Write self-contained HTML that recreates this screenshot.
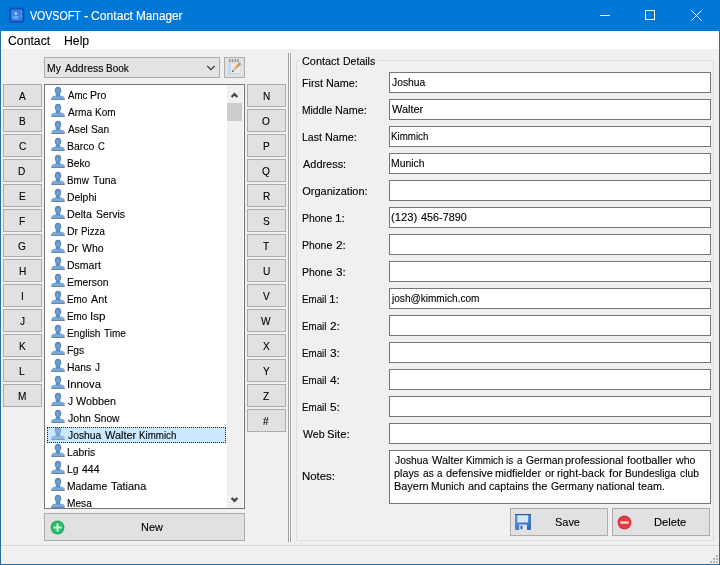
<!DOCTYPE html>
<html><head><meta charset="utf-8"><title>VOVSOFT - Contact Manager</title>
<style>
html,body{margin:0;padding:0;}
body{width:720px;height:565px;overflow:hidden;background:#f0f0f0;font-family:"Liberation Sans",sans-serif;position:relative;}
.a{position:absolute;box-sizing:border-box;}
.t{position:absolute;white-space:pre;line-height:normal;transform-origin:0 0;font-family:"Liberation Sans",sans-serif;-webkit-text-stroke:0.12px currentColor;}
.btn{position:absolute;box-sizing:border-box;background:#e1e1e1;border:1px solid #adadad;}
.fld{position:absolute;box-sizing:border-box;background:#fff;border:1px solid #767676;}
</style></head><body>
<div id="app" style="position:absolute;left:0;top:0;width:720px;height:565px;will-change:transform;">

<div class="a" style="left:0;top:0;width:720px;height:31px;background:#0078d7;"></div>
<div class="a" style="left:0;top:31px;width:720px;height:18px;background:#fff;"></div>
<svg class="a" style="left:8px;top:6px" width="18" height="18" viewBox="0 0 18 18"><rect x="1" y="1.500" width="15.300" height="15.200" rx="2.800" fill="#0c52be"/><rect x="3" y="3.500" width="11.300" height="11.200" rx="1.200" fill="#3b7fe2"/><circle cx="7.800" cy="7.400" r="1.500" fill="#9ad2ff"/><ellipse cx="7.800" cy="11.400" rx="3.100" ry="1.700" fill="#6aaaf2"/><rect x="12.600" y="5" width="1.600" height="2" fill="#5a98ee"/><rect x="12.600" y="9" width="1.600" height="2" fill="#5a98ee"/></svg>
<svg class="a" style="left:581px;top:0" width="138" height="31" viewBox="0 0 138 31" fill="none" stroke="#fff" stroke-width="1"><path d="M19 15.500h10"/><rect x="64.500" y="10.500" width="9" height="9"/><path d="M110.500 10.500l10 10m0-10l-10 10"/></svg>
<div class="a" style="left:288px;top:53px;width:1px;height:489px;background:#a0a0a0"></div>
<div class="a" style="left:290px;top:53px;width:1px;height:489px;background:#a0a0a0"></div>
<div class="a" style="left:289px;top:53px;width:1px;height:489px;background:#fafafa"></div>
<div class="a" style="left:291px;top:53px;width:1px;height:489px;background:#f9f9f9"></div>
<div class="btn" style="left:44px;top:57px;width:176px;height:21px;background:#e3e3e3;"></div>
<svg class="a" style="left:205px;top:64px" width="12" height="8" viewBox="0 0 12 8" fill="none" stroke="#333" stroke-width="1.300"><path d="M2.200 1.900l3.700 3.700l3.700-3.700"/></svg>
<div class="btn" style="left:224px;top:57px;width:21px;height:21px;"></div>
<svg class="a" style="left:227px;top:58px" width="16" height="18" viewBox="0 0 16 18"><defs><linearGradient id="pg" x1="1" y1="0" x2="0" y2="1"><stop offset="0" stop-color="#c68a42"/><stop offset="1" stop-color="#ecd0ae"/></linearGradient></defs><rect x="0.800" y="5.200" width="12.300" height="11.500" fill="#efe7e6"/><rect x="0.800" y="5.200" width="3.200" height="11.500" fill="#c3d9ec"/><rect x="0.800" y="15" width="12.300" height="1.700" fill="#c6dbf0"/><g fill="#9a9a9a"><rect x="2" y="1" width="1.600" height="3.200"/><rect x="4.700" y="1" width="1.600" height="3.200"/><rect x="7.400" y="1" width="1.600" height="3.200"/><rect x="10.100" y="1" width="1.600" height="3.200"/></g><path d="M12.600 5.900L6 12.800" stroke="url(#pg)" stroke-width="2.500" stroke-linecap="round"/><path d="M4.800 14.200l.6-2.200l1.700 1.600z" fill="#6e6258"/></svg>
<div class="btn" style="left:3px;top:84px;width:39px;height:23px;"></div>
<div class="btn" style="left:3px;top:109px;width:39px;height:23px;"></div>
<div class="btn" style="left:3px;top:134px;width:39px;height:23px;"></div>
<div class="btn" style="left:3px;top:159px;width:39px;height:23px;"></div>
<div class="btn" style="left:3px;top:184px;width:39px;height:23px;"></div>
<div class="btn" style="left:3px;top:209px;width:39px;height:23px;"></div>
<div class="btn" style="left:3px;top:234px;width:39px;height:23px;"></div>
<div class="btn" style="left:3px;top:259px;width:39px;height:23px;"></div>
<div class="btn" style="left:3px;top:284px;width:39px;height:23px;"></div>
<div class="btn" style="left:3px;top:309px;width:39px;height:23px;"></div>
<div class="btn" style="left:3px;top:334px;width:39px;height:23px;"></div>
<div class="btn" style="left:3px;top:359px;width:39px;height:23px;"></div>
<div class="btn" style="left:3px;top:384px;width:39px;height:23px;"></div>
<div class="btn" style="left:247px;top:84px;width:39px;height:23px;"></div>
<div class="btn" style="left:247px;top:109px;width:39px;height:23px;"></div>
<div class="btn" style="left:247px;top:134px;width:39px;height:23px;"></div>
<div class="btn" style="left:247px;top:159px;width:39px;height:23px;"></div>
<div class="btn" style="left:247px;top:184px;width:39px;height:23px;"></div>
<div class="btn" style="left:247px;top:209px;width:39px;height:23px;"></div>
<div class="btn" style="left:247px;top:234px;width:39px;height:23px;"></div>
<div class="btn" style="left:247px;top:259px;width:39px;height:23px;"></div>
<div class="btn" style="left:247px;top:284px;width:39px;height:23px;"></div>
<div class="btn" style="left:247px;top:309px;width:39px;height:23px;"></div>
<div class="btn" style="left:247px;top:334px;width:39px;height:23px;"></div>
<div class="btn" style="left:247px;top:359px;width:39px;height:23px;"></div>
<div class="btn" style="left:247px;top:384px;width:39px;height:23px;"></div>
<div class="btn" style="left:247px;top:409px;width:39px;height:23px;"></div>
<div class="a" id="lb" style="left:44px;top:84px;width:201px;height:425px;background:#fff;border:1px solid #767676;overflow:hidden;">
<div class="a" style="left:2px;top:342px;width:179px;height:16px;background:#cce8ff;border:1px dotted #222;"></div>
<svg class="a" style="left:5px;top:1px" width="16" height="16" viewBox="0 0 16 16"><use href="#person"/></svg>
<svg class="a" style="left:5px;top:18px" width="16" height="16" viewBox="0 0 16 16"><use href="#person"/></svg>
<svg class="a" style="left:5px;top:35px" width="16" height="16" viewBox="0 0 16 16"><use href="#person"/></svg>
<svg class="a" style="left:5px;top:52px" width="16" height="16" viewBox="0 0 16 16"><use href="#person"/></svg>
<svg class="a" style="left:5px;top:69px" width="16" height="16" viewBox="0 0 16 16"><use href="#person"/></svg>
<svg class="a" style="left:5px;top:86px" width="16" height="16" viewBox="0 0 16 16"><use href="#person"/></svg>
<svg class="a" style="left:5px;top:103px" width="16" height="16" viewBox="0 0 16 16"><use href="#person"/></svg>
<svg class="a" style="left:5px;top:120px" width="16" height="16" viewBox="0 0 16 16"><use href="#person"/></svg>
<svg class="a" style="left:5px;top:137px" width="16" height="16" viewBox="0 0 16 16"><use href="#person"/></svg>
<svg class="a" style="left:5px;top:154px" width="16" height="16" viewBox="0 0 16 16"><use href="#person"/></svg>
<svg class="a" style="left:5px;top:171px" width="16" height="16" viewBox="0 0 16 16"><use href="#person"/></svg>
<svg class="a" style="left:5px;top:188px" width="16" height="16" viewBox="0 0 16 16"><use href="#person"/></svg>
<svg class="a" style="left:5px;top:205px" width="16" height="16" viewBox="0 0 16 16"><use href="#person"/></svg>
<svg class="a" style="left:5px;top:222px" width="16" height="16" viewBox="0 0 16 16"><use href="#person"/></svg>
<svg class="a" style="left:5px;top:239px" width="16" height="16" viewBox="0 0 16 16"><use href="#person"/></svg>
<svg class="a" style="left:5px;top:256px" width="16" height="16" viewBox="0 0 16 16"><use href="#person"/></svg>
<svg class="a" style="left:5px;top:273px" width="16" height="16" viewBox="0 0 16 16"><use href="#person"/></svg>
<svg class="a" style="left:5px;top:290px" width="16" height="16" viewBox="0 0 16 16"><use href="#person"/></svg>
<svg class="a" style="left:5px;top:307px" width="16" height="16" viewBox="0 0 16 16"><use href="#person"/></svg>
<svg class="a" style="left:5px;top:324px" width="16" height="16" viewBox="0 0 16 16"><use href="#person"/></svg>
<svg class="a" style="opacity:0.75;left:5px;top:341px" width="16" height="16" viewBox="0 0 16 16"><use href="#person"/></svg>
<svg class="a" style="left:5px;top:358px" width="16" height="16" viewBox="0 0 16 16"><use href="#person"/></svg>
<svg class="a" style="left:5px;top:375px" width="16" height="16" viewBox="0 0 16 16"><use href="#person"/></svg>
<svg class="a" style="left:5px;top:392px" width="16" height="16" viewBox="0 0 16 16"><use href="#person"/></svg>
<svg class="a" style="left:5px;top:409px" width="16" height="16" viewBox="0 0 16 16"><use href="#person"/></svg>
<span class="t" style="left:22.89px;top:4.04px;font-size:11px;color:#000;transform:scaleX(0.8837);">Amc</span>
<span class="t" style="left:45.17px;top:4.04px;font-size:11px;color:#000;transform:scaleX(0.9524);">Pro</span>
<span class="t" style="left:22.89px;top:21.05px;font-size:11px;color:#000;transform:scaleX(0.9187);">Arma</span>
<span class="t" style="left:50.21px;top:21.05px;font-size:11px;color:#000;transform:scaleX(0.9048);">Kom</span>
<span class="t" style="left:22.88px;top:38.05px;font-size:11px;color:#000;transform:scaleX(0.9268);">Asel</span>
<span class="t" style="left:45.54px;top:38.05px;font-size:11px;color:#000;transform:scaleX(0.9252);">San</span>
<span class="t" style="left:22.17px;top:55.05px;font-size:11px;color:#000;transform:scaleX(0.9498);">Barco</span>
<span class="t" style="left:52.57px;top:55.05px;font-size:11px;color:#000;transform:scaleX(0.8571);">C</span>
<span class="t" style="left:22.19px;top:72.05px;font-size:11px;color:#000;transform:scaleX(0.9263);">Beko</span>
<span class="t" style="left:22.22px;top:89.05px;font-size:11px;color:#000;transform:scaleX(0.8889);">Bmw</span>
<span class="t" style="left:47.76px;top:89.05px;font-size:11px;color:#000;transform:scaleX(0.9436);">Tuna</span>
<span class="t" style="left:22.17px;top:106.05px;font-size:11px;color:#000;transform:scaleX(0.9451);">Delphi</span>
<span class="t" style="left:22.15px;top:123.05px;font-size:11px;color:#000;transform:scaleX(0.9697);">Delta</span>
<span class="t" style="left:50.53px;top:123.05px;font-size:11px;color:#000;transform:scaleX(0.9451);">Servis</span>
<span class="t" style="left:22.17px;top:140.04px;font-size:11px;color:#000;transform:scaleX(0.9524);">Dr</span>
<span class="t" style="left:36.23px;top:140.04px;font-size:11px;color:#000;transform:scaleX(0.8846);">Pizza</span>
<span class="t" style="left:22.17px;top:157.04px;font-size:11px;color:#000;transform:scaleX(0.9524);">Dr</span>
<span class="t" style="left:36.88px;top:157.04px;font-size:11px;color:#000;transform:scaleX(0.9545);">Who</span>
<span class="t" style="left:22.16px;top:174.04px;font-size:11px;color:#000;transform:scaleX(0.9565);">Dsmart</span>
<span class="t" style="left:22.17px;top:191.04px;font-size:11px;color:#000;transform:scaleX(0.9440);">Emerson</span>
<span class="t" style="left:22.22px;top:208.04px;font-size:11px;color:#000;transform:scaleX(0.8941);">Emo</span>
<span class="t" style="left:45.88px;top:208.04px;font-size:11px;color:#000;transform:scaleX(0.9771);">Ant</span>
<span class="t" style="left:22.22px;top:225.04px;font-size:11px;color:#000;transform:scaleX(0.8941);">Emo</span>
<span class="t" style="left:44.94px;top:225.04px;font-size:11px;color:#000;transform:scaleX(1.0566);">Isp</span>
<span class="t" style="left:22.19px;top:242.04px;font-size:11px;color:#000;transform:scaleX(0.9275);">English</span>
<span class="t" style="left:58.77px;top:242.04px;font-size:11px;color:#000;transform:scaleX(0.9032);">Time</span>
<span class="t" style="left:22.18px;top:259.05px;font-size:11px;color:#000;transform:scaleX(0.9343);">Fgs</span>
<span class="t" style="left:22.17px;top:276.05px;font-size:11px;color:#000;transform:scaleX(0.9436);">Hans</span>
<span class="t" style="left:49.77px;top:276.05px;font-size:11px;color:#000;transform:scaleX(0.9143);">J</span>
<span class="t" style="left:21.97px;top:293.05px;font-size:11px;color:#000;transform:scaleX(1.0312);">Innova</span>
<span class="t" style="left:22.77px;top:310.05px;font-size:11px;color:#000;transform:scaleX(0.9143);">J</span>
<span class="t" style="left:30.88px;top:310.05px;font-size:11px;color:#000;transform:scaleX(0.9781);">Wobben</span>
<span class="t" style="left:22.76px;top:327.05px;font-size:11px;color:#000;transform:scaleX(0.9617);">John</span>
<span class="t" style="left:48.54px;top:327.05px;font-size:11px;color:#000;transform:scaleX(0.9259);">Snow</span>
<span class="t" style="left:22.77px;top:344.05px;font-size:11px;color:#000;transform:scaleX(0.9362);">Joshua</span>
<span class="t" style="left:59.88px;top:344.05px;font-size:11px;color:#000;transform:scaleX(0.9960);">Walter</span>
<span class="t" style="left:94.22px;top:344.05px;font-size:11px;color:#000;transform:scaleX(0.8862);">Kimmich</span>
<span class="t" style="left:22.18px;top:361.05px;font-size:11px;color:#000;transform:scaleX(0.9391);">Labris</span>
<span class="t" style="left:22.18px;top:378.05px;font-size:11px;color:#000;transform:scaleX(0.9412);">Lg</span>
<span class="t" style="left:36.76px;top:378.05px;font-size:11px;color:#000;transform:scaleX(0.9577);">444</span>
<span class="t" style="left:22.18px;top:395.05px;font-size:11px;color:#000;transform:scaleX(0.9398);">Madame</span>
<span class="t" style="left:65.75px;top:395.05px;font-size:11px;color:#000;transform:scaleX(0.9929);">Tatiana</span>
<span class="t" style="left:22.19px;top:412.05px;font-size:11px;color:#000;transform:scaleX(0.9231);">Mesa</span>
<div class="a" style="left:182px;top:0;width:16px;height:423px;background:#f0f0f0;"></div>
<div class="a" style="left:182px;top:18px;width:15px;height:18px;background:#cdcdcd;"></div>
<svg class="a" style="left:184px;top:5px" width="11" height="9" viewBox="0 0 11 9" fill="none" stroke="#454545" stroke-width="2.300"><path d="M2.600 7l2.900-2.900l2.900 2.900"/></svg>
<svg class="a" style="left:184px;top:410.500px" width="11" height="9" viewBox="0 0 11 9" fill="none" stroke="#454545" stroke-width="2.300"><path d="M2.600 2l2.900 2.900l2.900-2.900"/></svg>
</div>
<div class="btn" style="left:44px;top:513px;width:201px;height:28px;"></div>
<svg class="a" style="left:49.500px;top:519.500px" width="15" height="15" viewBox="0 0 15 15"><circle cx="7.500" cy="7.500" r="6.900" fill="#27a45e"/><circle cx="7.500" cy="7.500" r="5.900" fill="#2fbb6c"/><path d="M7.500 3.500v8M3.500 7.500h8" stroke="#c6ffdc" stroke-width="2"/></svg>
<div class="a" style="left:296px;top:60px;width:418px;height:481px;border:1px solid #dfdfdf;"></div>
<div class="a" style="left:300px;top:56px;width:78px;height:10px;background:#f0f0f0;"></div>
<div class="fld" style="left:389px;top:72px;width:322px;height:21px;"></div>
<div class="fld" style="left:389px;top:99px;width:322px;height:21px;"></div>
<div class="fld" style="left:389px;top:126px;width:322px;height:21px;"></div>
<div class="fld" style="left:389px;top:153px;width:322px;height:21px;"></div>
<div class="fld" style="left:389px;top:180px;width:322px;height:21px;"></div>
<div class="fld" style="left:389px;top:207px;width:322px;height:21px;"></div>
<div class="fld" style="left:389px;top:234px;width:322px;height:21px;"></div>
<div class="fld" style="left:389px;top:261px;width:322px;height:21px;"></div>
<div class="fld" style="left:389px;top:288px;width:322px;height:21px;"></div>
<div class="fld" style="left:389px;top:315px;width:322px;height:21px;"></div>
<div class="fld" style="left:389px;top:342px;width:322px;height:21px;"></div>
<div class="fld" style="left:389px;top:369px;width:322px;height:21px;"></div>
<div class="fld" style="left:389px;top:396px;width:322px;height:21px;"></div>
<div class="fld" style="left:389px;top:423px;width:322px;height:21px;"></div>
<div class="fld" style="left:389px;top:450px;width:322px;height:54px;"></div>
<div class="btn" style="left:510px;top:508px;width:98px;height:28px;"></div>
<div class="btn" style="left:612px;top:508px;width:98px;height:28px;"></div>
<svg class="a" style="left:515px;top:514px" width="16" height="16" viewBox="0 0 16 16"><defs><linearGradient id="fl" x1="0" y1="0" x2="1" y2="1"><stop offset="0" stop-color="#5a9ae6"/><stop offset="1" stop-color="#2f66b4"/></linearGradient></defs><rect x="0" y="0" width="16" height="16" rx="1" fill="url(#fl)"/><rect x="0" y="0" width="16" height="1.200" fill="#2b5c9c"/><rect x="2.400" y="1.400" width="10.800" height="7" fill="#ddeeff"/><path d="M3.400 3.800h8.800M3.400 6h8.800" stroke="#bcd6f2" stroke-width="0.800"/><rect x="4.200" y="10.600" width="7.800" height="5.400" fill="#d6e3f4"/><rect x="5.600" y="12" width="1.700" height="3.200" fill="#33507c"/></svg>
<svg class="a" style="left:617.200px;top:514.800px" width="15" height="15" viewBox="0 0 15 15"><circle cx="7.500" cy="7.500" r="6.900" fill="#cf3038"/><circle cx="7.500" cy="7.500" r="5.900" fill="#e23c46"/><rect x="3.400" y="6.500" width="8.200" height="2.100" fill="#ffe9dc"/></svg>
<div class="a" style="left:1px;top:545px;width:718px;height:1px;background:#d7d7d7;"></div>
<div class="a" style="left:716px;top:555px;width:2px;height:2px;background:#b8b8b8;"></div><div class="a" style="left:713px;top:558px;width:2px;height:2px;background:#b8b8b8;"></div><div class="a" style="left:716px;top:558px;width:2px;height:2px;background:#b8b8b8;"></div><div class="a" style="left:710px;top:561px;width:2px;height:2px;background:#b8b8b8;"></div><div class="a" style="left:713px;top:561px;width:2px;height:2px;background:#b8b8b8;"></div><div class="a" style="left:716px;top:561px;width:2px;height:2px;background:#b8b8b8;"></div>
<div class="a" style="left:0;top:31px;width:1px;height:534px;background:#2b6f9c;"></div>
<div class="a" style="left:719px;top:31px;width:1px;height:534px;background:#2b6f9c;"></div>
<div class="a" style="left:0;top:564px;width:720px;height:1px;background:#2a6aa0;"></div>
<span class="t" style="left:30.29px;top:9.44px;font-size:12px;color:#fff;transform:scaleX(0.8826);">VOVSOFT</span>
<span class="t" style="left:84.14px;top:9.44px;font-size:12px;color:#fff;transform:scaleX(1.0800);">-</span>
<span class="t" style="left:91.27px;top:9.44px;font-size:12px;color:#fff;transform:scaleX(1.0142);">Contact</span>
<span class="t" style="left:136.27px;top:9.44px;font-size:12px;color:#fff;transform:scaleX(0.9810);">Manager</span>
<span class="t" style="left:7.66px;top:33.74px;font-size:12px;color:#000;transform:scaleX(1.0191);">Contact</span>
<span class="t" style="left:63.68px;top:33.74px;font-size:12px;color:#000;transform:scaleX(1.0205);">Help</span>
<span class="t" style="left:46.97px;top:61.84px;font-size:11px;color:#000;transform:scaleX(0.9455);">My</span>
<span class="t" style="left:64.68px;top:61.84px;font-size:11px;color:#000;transform:scaleX(0.9530);">Address</span>
<span class="t" style="left:106.00px;top:61.84px;font-size:11px;color:#000;transform:scaleX(0.9119);">Book</span>
<span class="t" style="left:18.81px;top:89.84px;font-size:11px;color:#000;transform:scaleX(0.9200);">A</span>
<span class="t" style="left:18.69px;top:114.84px;font-size:11px;color:#000;transform:scaleX(0.9200);">B</span>
<span class="t" style="left:18.52px;top:139.84px;font-size:11px;color:#000;transform:scaleX(0.9200);">C</span>
<span class="t" style="left:18.40px;top:164.84px;font-size:11px;color:#000;transform:scaleX(0.9200);">D</span>
<span class="t" style="left:18.63px;top:189.84px;font-size:11px;color:#000;transform:scaleX(0.9200);">E</span>
<span class="t" style="left:18.92px;top:214.84px;font-size:11px;color:#000;transform:scaleX(0.9200);">F</span>
<span class="t" style="left:18.40px;top:239.84px;font-size:11px;color:#000;transform:scaleX(0.9200);">G</span>
<span class="t" style="left:18.58px;top:264.85px;font-size:11px;color:#000;transform:scaleX(0.9200);">H</span>
<span class="t" style="left:20.82px;top:289.85px;font-size:11px;color:#000;transform:scaleX(0.9200);">I</span>
<span class="t" style="left:19.96px;top:314.85px;font-size:11px;color:#000;transform:scaleX(0.9200);">J</span>
<span class="t" style="left:18.52px;top:339.85px;font-size:11px;color:#000;transform:scaleX(0.9200);">K</span>
<span class="t" style="left:19.15px;top:364.85px;font-size:11px;color:#000;transform:scaleX(0.9200);">L</span>
<span class="t" style="left:18.00px;top:389.85px;font-size:11px;color:#000;transform:scaleX(0.9200);">M</span>
<span class="t" style="left:262.68px;top:89.84px;font-size:11px;color:#000;transform:scaleX(0.9200);">N</span>
<span class="t" style="left:262.39px;top:114.84px;font-size:11px;color:#000;transform:scaleX(0.9200);">O</span>
<span class="t" style="left:262.79px;top:139.84px;font-size:11px;color:#000;transform:scaleX(0.9200);">P</span>
<span class="t" style="left:262.39px;top:164.84px;font-size:11px;color:#000;transform:scaleX(0.9200);">Q</span>
<span class="t" style="left:262.50px;top:189.84px;font-size:11px;color:#000;transform:scaleX(0.9200);">R</span>
<span class="t" style="left:262.91px;top:214.84px;font-size:11px;color:#000;transform:scaleX(0.9200);">S</span>
<span class="t" style="left:263.19px;top:239.84px;font-size:11px;color:#000;transform:scaleX(0.9200);">T</span>
<span class="t" style="left:262.62px;top:264.85px;font-size:11px;color:#000;transform:scaleX(0.9200);">U</span>
<span class="t" style="left:262.91px;top:289.85px;font-size:11px;color:#000;transform:scaleX(0.9200);">V</span>
<span class="t" style="left:261.47px;top:314.85px;font-size:11px;color:#000;transform:scaleX(0.9200);">W</span>
<span class="t" style="left:262.97px;top:339.85px;font-size:11px;color:#000;transform:scaleX(0.9200);">X</span>
<span class="t" style="left:262.97px;top:364.85px;font-size:11px;color:#000;transform:scaleX(0.9200);">Y</span>
<span class="t" style="left:263.19px;top:389.85px;font-size:11px;color:#000;transform:scaleX(0.9200);">Z</span>
<span class="t" style="left:263.48px;top:414.85px;font-size:11px;color:#000;transform:scaleX(0.9200);">#</span>
<span class="t" style="left:302.11px;top:55.05px;font-size:11px;color:#000;transform:scaleX(0.9900);">Contact</span>
<span class="t" style="left:342.76px;top:55.05px;font-size:11px;color:#000;transform:scaleX(0.9575);">Details</span>
<span class="t" style="left:301.84px;top:76.84px;font-size:11px;color:#000;transform:scaleX(0.9816);">First</span>
<span class="t" style="left:325.84px;top:76.84px;font-size:11px;color:#000;transform:scaleX(0.9836);">Name:</span>
<span class="t" style="left:301.88px;top:103.84px;font-size:11px;color:#000;transform:scaleX(0.9355);">Middle</span>
<span class="t" style="left:334.84px;top:103.84px;font-size:11px;color:#000;transform:scaleX(0.9836);">Name:</span>
<span class="t" style="left:301.86px;top:130.84px;font-size:11px;color:#000;transform:scaleX(0.9560);">Last</span>
<span class="t" style="left:324.84px;top:130.84px;font-size:11px;color:#000;transform:scaleX(0.9836);">Name:</span>
<span class="t" style="left:302.58px;top:157.84px;font-size:11px;color:#000;transform:scaleX(0.9941);">Address:</span>
<span class="t" style="left:302.20px;top:184.84px;font-size:11px;color:#000;">Organization:</span>
<span class="t" style="left:301.87px;top:211.84px;font-size:11px;color:#000;transform:scaleX(0.9508);">Phone</span>
<span class="t" style="left:335.34px;top:211.84px;font-size:11px;color:#000;transform:scaleX(1.0800);">1:</span>
<span class="t" style="left:301.87px;top:238.84px;font-size:11px;color:#000;transform:scaleX(0.9508);">Phone</span>
<span class="t" style="left:335.54px;top:238.84px;font-size:11px;color:#000;transform:scaleX(1.0800);">2:</span>
<span class="t" style="left:301.87px;top:265.85px;font-size:11px;color:#000;transform:scaleX(0.9508);">Phone</span>
<span class="t" style="left:335.54px;top:265.85px;font-size:11px;color:#000;transform:scaleX(1.0800);">3:</span>
<span class="t" style="left:301.92px;top:292.85px;font-size:11px;color:#000;transform:scaleX(0.8889);">Email</span>
<span class="t" style="left:329.34px;top:292.85px;font-size:11px;color:#000;transform:scaleX(1.0800);">1:</span>
<span class="t" style="left:301.92px;top:319.85px;font-size:11px;color:#000;transform:scaleX(0.8889);">Email</span>
<span class="t" style="left:329.54px;top:319.85px;font-size:11px;color:#000;transform:scaleX(1.0800);">2:</span>
<span class="t" style="left:301.92px;top:346.85px;font-size:11px;color:#000;transform:scaleX(0.8889);">Email</span>
<span class="t" style="left:329.54px;top:346.85px;font-size:11px;color:#000;transform:scaleX(1.0800);">3:</span>
<span class="t" style="left:301.92px;top:373.85px;font-size:11px;color:#000;transform:scaleX(0.8889);">Email</span>
<span class="t" style="left:329.68px;top:373.85px;font-size:11px;color:#000;transform:scaleX(1.0800);">4:</span>
<span class="t" style="left:301.92px;top:400.85px;font-size:11px;color:#000;transform:scaleX(0.8889);">Email</span>
<span class="t" style="left:329.54px;top:400.85px;font-size:11px;color:#000;transform:scaleX(1.0800);">5:</span>
<span class="t" style="left:302.58px;top:427.85px;font-size:11px;color:#000;transform:scaleX(0.9600);">Web</span>
<span class="t" style="left:327.19px;top:427.85px;font-size:11px;color:#000;transform:scaleX(1.0244);">Site:</span>
<span class="t" style="left:301.79px;top:470.05px;font-size:11px;color:#000;transform:scaleX(1.0377);">Notes:</span>
<span class="t" style="left:391.77px;top:76.05px;font-size:11px;color:#000;transform:scaleX(0.9362);">Joshua</span>
<span class="t" style="left:391.88px;top:103.05px;font-size:11px;color:#000;transform:scaleX(0.9960);">Walter</span>
<span class="t" style="left:391.22px;top:130.04px;font-size:11px;color:#000;transform:scaleX(0.8862);">Kimmich</span>
<span class="t" style="left:391.17px;top:157.04px;font-size:11px;color:#000;transform:scaleX(0.9446);">Munich</span>
<span class="t" style="left:391.36px;top:211.04px;font-size:11px;color:#000;transform:scaleX(1.0256);">(123)</span>
<span class="t" style="left:420.75px;top:211.04px;font-size:11px;color:#000;transform:scaleX(0.9836);">456-7890</span>
<span class="t" style="left:392.23px;top:292.05px;font-size:11px;color:#000;transform:scaleX(0.9158);">josh@kimmich.com</span>
<span class="t" style="left:394.77px;top:453.94px;font-size:11px;color:#000;transform:scaleX(0.9362);">Joshua</span>
<span class="t" style="left:431.88px;top:453.94px;font-size:11px;color:#000;transform:scaleX(0.9960);">Walter</span>
<span class="t" style="left:466.22px;top:453.94px;font-size:11px;color:#000;transform:scaleX(0.8862);">Kimmich</span>
<span class="t" style="left:506.33px;top:453.94px;font-size:11px;color:#000;transform:scaleX(0.8889);">is</span>
<span class="t" style="left:516.56px;top:453.94px;font-size:11px;color:#000;transform:scaleX(0.8889);">a</span>
<span class="t" style="left:525.53px;top:453.94px;font-size:11px;color:#000;transform:scaleX(0.9351);">German</span>
<span class="t" style="left:565.26px;top:453.94px;font-size:11px;color:#000;transform:scaleX(0.9849);">professional</span>
<span class="t" style="left:626.88px;top:453.94px;font-size:11px;color:#000;">footballer</span>
<span class="t" style="left:676.00px;top:453.94px;font-size:11px;color:#000;transform:scaleX(0.9620);">who</span>
<span class="t" style="left:394.27px;top:466.94px;font-size:11px;color:#000;transform:scaleX(0.9796);">plays</span>
<span class="t" style="left:422.53px;top:466.94px;font-size:11px;color:#000;transform:scaleX(0.9302);">as</span>
<span class="t" style="left:436.56px;top:466.94px;font-size:11px;color:#000;transform:scaleX(0.8889);">a</span>
<span class="t" style="left:445.50px;top:466.94px;font-size:11px;color:#000;transform:scaleX(0.9973);">defensive</span>
<span class="t" style="left:495.28px;top:466.94px;font-size:11px;color:#000;transform:scaleX(0.9626);">midfielder</span>
<span class="t" style="left:544.51px;top:466.94px;font-size:11px;color:#000;transform:scaleX(0.9863);">or</span>
<span class="t" style="left:557.26px;top:466.94px;font-size:11px;color:#000;transform:scaleX(0.9895);">right-back</span>
<span class="t" style="left:608.87px;top:466.94px;font-size:11px;color:#000;transform:scaleX(1.0400);">for</span>
<span class="t" style="left:625.18px;top:466.94px;font-size:11px;color:#000;transform:scaleX(0.9346);">Bundesliga</span>
<span class="t" style="left:679.53px;top:466.94px;font-size:11px;color:#000;transform:scaleX(0.9351);">club</span>
<span class="t" style="left:394.13px;top:479.94px;font-size:11px;color:#000;transform:scaleX(0.9925);">Bayern</span>
<span class="t" style="left:431.17px;top:479.94px;font-size:11px;color:#000;transform:scaleX(0.9446);">Munich</span>
<span class="t" style="left:467.50px;top:479.94px;font-size:11px;color:#000;transform:scaleX(0.9927);">and</span>
<span class="t" style="left:488.51px;top:479.94px;font-size:11px;color:#000;transform:scaleX(0.9720);">captains</span>
<span class="t" style="left:531.87px;top:479.94px;font-size:11px;color:#000;transform:scaleX(1.0169);">the</span>
<span class="t" style="left:550.53px;top:479.94px;font-size:11px;color:#000;transform:scaleX(0.9412);">Germany</span>
<span class="t" style="left:596.25px;top:479.94px;font-size:11px;color:#000;">national</span>
<span class="t" style="left:637.88px;top:479.94px;font-size:11px;color:#000;transform:scaleX(0.9858);">team.</span>
<span class="t" style="left:141.33px;top:520.75px;font-size:11px;color:#000;transform:scaleX(0.9941);">New</span>
<span class="t" style="left:554.90px;top:516.04px;font-size:11px;color:#000;transform:scaleX(0.9948);">Save</span>
<span class="t" style="left:653.51px;top:516.04px;font-size:11px;color:#000;transform:scaleX(1.0164);">Delete</span>
<svg width="0" height="0" style="position:absolute"><defs>
<radialGradient id="hg" cx="0.5" cy="0.55" r="0.6"><stop offset="0" stop-color="#78ace0"/><stop offset="1" stop-color="#4f7cb0"/></radialGradient>
<linearGradient id="sg" x1="0" y1="0" x2="0" y2="1"><stop offset="0" stop-color="#6ea2d8"/><stop offset="1" stop-color="#86b1dc"/></linearGradient>
<g id="person"><path d="M1.300 13.750v-1.700q0-1.600 2.300-2.050l2.600-.600h3.600l2.600.600q2.300.450 2.300 2.050v1.700z" fill="url(#sg)"/><rect x="1.300" y="12.900" width="13.400" height="0.900" fill="#58779f"/><rect x="5.800" y="7.500" width="4.400" height="3" fill="#4f94d2"/><ellipse cx="8" cy="4.600" rx="3.200" ry="3.800" fill="url(#hg)"/></g>
</defs></svg>
</div></body></html>
